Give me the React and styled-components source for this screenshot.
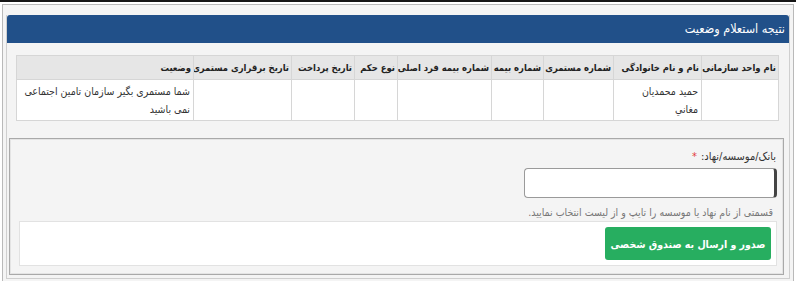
import React from "react";
import styled, { createGlobalStyle } from "styled-components";

const FONT = `Tahoma, "DejaVu Sans Condensed", "DejaVu Sans", sans-serif`;

const Global = createGlobalStyle`
  html, body { margin: 0; padding: 0; background: #ffffff; }
  body { font-family: ${FONT}; color: #333; }
  * { box-sizing: border-box; }
`;

const TopLine = styled.div`
  height: 2px;
  background: #151515;
`;

const Panel = styled.div`
  margin: 2px 2px 0 2px;
  border: 1px solid #b9b9b9;
  background: #f4f4f4;
  padding: 10px 3px 3px 3px;
  direction: rtl;
`;

const InnerBox = styled.div`
  border: 1px solid #cfcfcf;
  border-top: none;
  padding-bottom: 3px;
`;

const Header = styled.div`
  height: 28px;
  background: #215089;
  color: #ffffff;
  font-size: 12.5px;
  line-height: 28px;
  padding-right: 4px;
  border-top-right-radius: 3px;
  border-top-left-radius: 3px;
`;

const Table = styled.table`
  margin: 12px 10px 0 10px;
  width: calc(100% - 20px);
  border-collapse: collapse;
  table-layout: fixed;
`;

const Th = styled.th`
  background: #e6e6e6;
  border: 1px solid #d6d6d6;
  height: 24px;
  padding: 0 2px;
  text-align: right;
  font-size: 9.4px;
  font-weight: bold;
  color: #222;
  white-space: nowrap;
  overflow: hidden;
`;

const Td = styled.td`
  background: #ffffff;
  border: 1px solid #d6d6d6;
  height: 40px;
  padding: 2px 3px;
  text-align: right;
  vertical-align: middle;
  font-size: 10.5px;
  line-height: 18px;
  color: #333;
  white-space: pre-line;
`;

const Fieldset = styled.div`
  margin: 17px 5px 0 2px;
  border: 1px solid #a9a9a9;
  box-shadow: inset 0 0 0 1px #e4e4e4;
  padding: 10px 6px 8px 9px;
  display: flex;
  flex-direction: column;
  align-items: flex-start;
`;

const Label = styled.div`
  font-size: 11px;
  line-height: 16px;
  color: #333;
  padding-right: 1px;
`;

const Star = styled.span`
  color: #e23b3b;
  margin-right: 4px;
`;

const Input = styled.input`
  margin-top: 3px;
  width: 253px;
  height: 30px;
  border: 1px solid #9a9a9a;
  border-right: 3px solid #444;
  border-radius: 4px;
  background: #fff;
  outline: none;
`;

const Hint = styled.div`
  margin-top: 6px;
  font-size: 10.5px;
  line-height: 16px;
  color: #777;
  padding-right: 4px;
`;

const Actions = styled.div`
  margin-top: 1px;
  align-self: stretch;
  background: #ffffff;
  border: 1px solid #e2e2e2;
  padding: 5px;
  display: flex;
`;

const Button = styled.button`
  height: 33px;
  width: 166px;
  border: none;
  border-radius: 3px;
  background: #27ae60;
  color: #ffffff;
  font-family: ${FONT};
  font-size: 10.5px;
  font-weight: 600;
  white-space: nowrap;
  padding: 0;
  cursor: pointer;
`;

const columns = [
  { title: "نام واحد سازمانی", w: 77 },
  { title: "نام و نام خانوادگی", w: 88 },
  { title: "شماره مستمری", w: 70 },
  { title: "شماره بیمه", w: 52 },
  { title: "شماره بیمه فرد اصلی", w: 94 },
  { title: "نوع حکم", w: 43 },
  { title: "تاریخ پرداخت", w: 63 },
  { title: "تاریخ برقراری مستمری", w: 98 },
  { title: "وضعیت", w: 177 },
];

const row = [
  "",
  "حمید محمدیان\nمغاني",
  "",
  "",
  "",
  "",
  "",
  "",
  "شما مستمری بگیر سازمان تامین اجتماعی\nنمی باشید",
];

export default function App() {
  return (
    <>
      <Global />
      <TopLine />
      <Panel>
        <InnerBox>
          <Header>نتیجه استعلام وضعیت</Header>
          <Table>
            <colgroup>
              {columns.map((c, i) => (
                <col key={i} style={{ width: c.w }} />
              ))}
            </colgroup>
            <thead>
              <tr>
                {columns.map((c, i) => (
                  <Th key={i}>{c.title}</Th>
                ))}
              </tr>
            </thead>
            <tbody>
              <tr>
                {row.map((v, i) => (
                  <Td key={i}>{v}</Td>
                ))}
              </tr>
            </tbody>
          </Table>
          <Fieldset>
            <Label>
              بانک/موسسه/نهاد:<Star>*</Star>
            </Label>
            <Input type="text" />
            <Hint>قسمتی از نام نهاد یا موسسه را تایپ و از لیست انتخاب نمایید.</Hint>
            <Actions>
              <Button>صدور و ارسال به صندوق شخصی</Button>
            </Actions>
          </Fieldset>
        </InnerBox>
      </Panel>
    </>
  );
}
